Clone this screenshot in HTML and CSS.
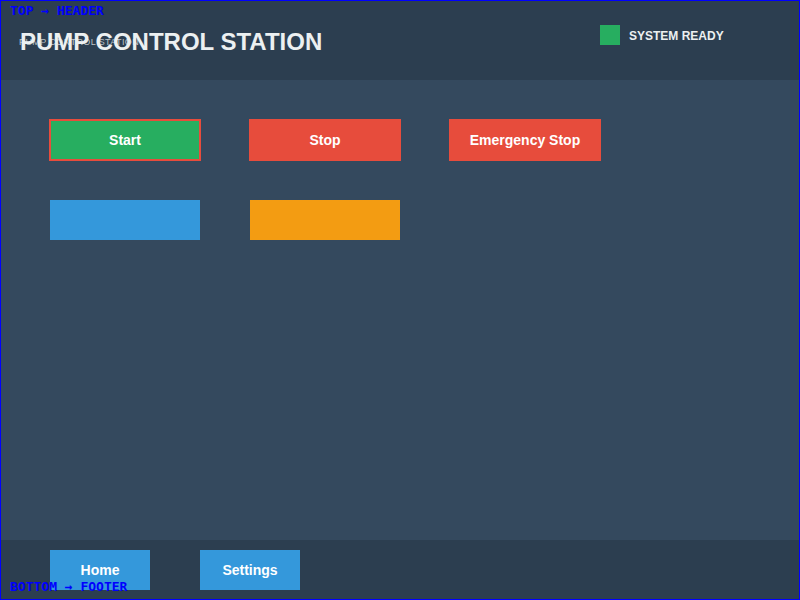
FILE: index.html
```html
<!DOCTYPE html>
<html lang="en">
<head>
<meta charset="utf-8">
<title>Pump Control Station</title>
<link rel="stylesheet" href="styles.css">
</head>
<body>
<div class="app">
  <header class="header">
    <span class="ghost">PUMP CONTROL STATION</span>
    <h1 class="title">PUMP CONTROL STATION</h1>
    <div class="status">
      <span class="status-led"></span>
      <span class="status-text">SYSTEM READY</span>
    </div>
    <span class="tag tag-top">TOP → HEADER</span>
  </header>
  <main class="main">
    <div class="controls">
      <button class="btn btn-start">Start</button>
      <button class="btn btn-stop">Stop</button>
      <button class="btn btn-stop">Emergency Stop</button>
      <div class="panel panel-blue"></div>
      <div class="panel panel-orange"></div>
    </div>
  </main>
  <footer class="footer">
    <button class="nav-btn">Home</button>
    <button class="nav-btn">Settings</button>
    <span class="tag tag-bottom">BOTTOM → FOOTER</span>
  </footer>
</div>
</body>
</html>
```

FILE: styles.css
```css
html, body {
  margin: 0;
  padding: 0;
}
body {
  font-family: "Liberation Sans", Arial, sans-serif;
  background: #34495e;
}
.app {
  box-sizing: border-box;
  width: 800px;
  height: 600px;
  border: 1px solid #0000ff;
  display: flex;
  flex-direction: column;
  position: relative;
  overflow: hidden;
}
.header {
  position: relative;
  height: 79px;
  flex: none;
  background: #2c3e50;
  display: flex;
  align-items: center;
  padding: 0 0 0 19px;
}
.title {
  position: relative;
  margin: 3px 0 0 0;
  font-size: 24px;
  font-weight: bold;
  color: #ecf0f1;
  line-height: 28px;
}
.ghost {
  position: absolute;
  left: 18px;
  top: 36px;
  font-size: 9px;
  letter-spacing: 0.4px;
  line-height: 11px;
  color: #bdc3c7;
}
.status {
  position: absolute;
  left: 599px;
  top: 24px;
  display: flex;
  align-items: center;
  gap: 9px;
}
.status-led {
  width: 20px;
  height: 20px;
  background: #27ae60;
}
.status-text {
  font-size: 12px;
  font-weight: bold;
  color: #ecf0f1;
  padding-top: 2px;
}
.tag {
  position: absolute;
  left: 9px;
  font-family: "DejaVu Sans Mono", "Liberation Mono", monospace;
  font-weight: bold;
  font-size: 13px;
  line-height: 15px;
  color: #0000ff;
  white-space: nowrap;
}
.tag-top {
  top: 2px;
}
.tag-bottom {
  bottom: 5px;
}
.main {
  flex: 1;
  background: #34495e;
  padding: 40px 0 0 49px;
}
.controls {
  display: grid;
  grid-template-columns: repeat(3, 150px);
  grid-auto-rows: 40px;
  column-gap: 50px;
  row-gap: 40px;
}
.btn {
  box-sizing: border-box;
  width: 152px;
  height: 42px;
  margin: -1px;
  border: 2px solid #e74c3c;
  font-family: "Liberation Sans", Arial, sans-serif;
  font-size: 14px;
  font-weight: bold;
  color: #ffffff;
  padding: 0;
  cursor: pointer;
}
.btn-start {
  background: #27ae60;
}
.btn-stop {
  background: #e74c3c;
}
.panel-blue {
  background: #3498db;
}
.panel-orange {
  background: #f39c12;
}
.footer {
  position: relative;
  height: 59px;
  flex: none;
  background: #2c3e50;
  display: flex;
  align-items: flex-start;
  gap: 50px;
  padding: 10px 0 0 49px;
  box-sizing: border-box;
}
.nav-btn {
  width: 100px;
  height: 40px;
  border: none;
  background: #3498db;
  color: #ffffff;
  font-family: "Liberation Sans", Arial, sans-serif;
  font-size: 14px;
  font-weight: bold;
  padding: 0;
}
```
